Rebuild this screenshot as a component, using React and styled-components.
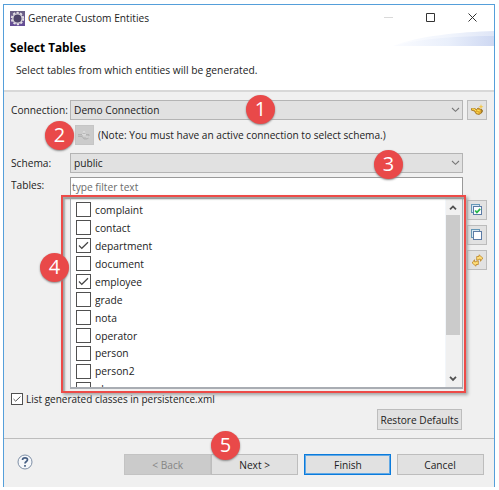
import React from "react";
import styled, { createGlobalStyle, css } from "styled-components";

const GlobalStyle = createGlobalStyle`
  * { box-sizing: border-box; }
  body { margin: 0; background: #fff; overflow: hidden; }
`;

const Dialog = styled.main`
  position: relative;
  display: flex;
  flex-direction: column;
  width: 492px;
  height: 483px;
  margin: 4px 0 0 3px;
  border: 1px solid #559fda;
  border-bottom: 0;
  background: #f0f0f0;
  color: #1c1c1c;
  font: 11px/18px "Open Sans", "Noto Sans", sans-serif;
`;

const Label = styled.span`
  display: block;
  white-space: pre;
  transform: scaleX(${(p) => p.$scale || 0.925});
  transform-origin: ${(p) => (p.$center ? "center" : "left")};
`;

const Header = styled.header`
  height: 87px;
  background: #fff;
  border-bottom: 2px solid #d8d8d8;
`;

const TitleBar = styled.div`
  display: flex;
  align-items: center;
  height: 26px;
  padding-left: 6px;
  gap: 3px;
`;

const WindowControls = styled.svg`
  width: 94px;
  height: 10px;
  margin: -1px 17px 0 auto;
`;

const Banner = styled.div`
  display: flex;
  justify-content: space-between;
  height: 28px;
`;

const Heading = styled.h1`
  margin: 7px 0 0 6px;
  color: #000;
  font-size: 12px;
  line-height: 20px;
  transform: scaleX(0.98);
  transform-origin: left;
`;

const Description = styled.div`
  padding: 2px 0 0 12px;
`;

const Body = styled.section`
  display: flex;
  flex-direction: column;
  height: 346px;
  padding: 8px 7px 0;
`;

const Field = styled.div`
  display: grid;
  grid-template-columns: 55px 393px 20px;
  column-gap: 4px;
  align-items: center;
  height: 20px;
`;

const Select = styled.div`
  display: flex;
  align-items: center;
  justify-content: space-between;
  height: 20px;
  padding: 0 2px 1px 3px;
  border: 1px solid #b4b4b4;
  background: #e1e1e1;
`;

const IconButton = styled.button`
  display: grid;
  place-items: center;
  width: ${(p) => (p.$disabled ? 19 : 20)}px;
  height: 20px;
  padding: 0;
  border: 1px solid ${(p) => (p.$disabled ? "#c5c5c5" : "#bcbcbc")};
  background: ${(p) => (p.$disabled ? "#cbcbcb" : "#e2e2e2")};
`;

const NoteRow = styled.div`
  display: flex;
  align-items: center;
  gap: 4px;
  height: 20px;
  margin: 5px 0 8px 64px;
`;

const TablesRow = styled.div`
  display: grid;
  grid-template-columns: 55px 393px 20px;
  column-gap: 4px;
  height: 212px;
  margin-top: 4px;
`;

const TablesLabel = styled.div`
  margin-top: -1px;
`;

const FilterInput = styled.div`
  height: 22px;
  padding: 0 1px;
  border: 1px solid #999;
  background: #fff;
  color: #6b6b6b;
`;

const TableList = styled.div`
  display: flex;
  justify-content: space-between;
  height: 190px;
  overflow: hidden;
  border: 1px solid #a9adb3;
  border-top: 0;
  border-bottom-width: 2px;
  background: #fff;
`;

const Rows = styled.div`
  padding: 2px 0 0 5px;
`;

const TableRow = styled.div`
  display: flex;
  align-items: center;
  height: 17.95px;
  gap: 4px;
`;

const Check = styled.span`
  display: grid;
  place-items: center;
  flex: none;
  width: ${(p) => p.$size}px;
  height: ${(p) => p.$size}px;
  border: 1px solid #505050;
  background: #fff;
`;

const Scrollbar = styled.div`
  width: 17px;
  padding-right: 2px;
  border-left: 1px solid #f2f6fa;
  background: #f0f0f0;
  display: flex;
  flex-direction: column;
  align-items: center;
`;

const ScrollThumb = styled.div`
  width: 14px;
  height: 121px;
  margin-bottom: 36px;
  background: #cbcbcb;
`;

const SideButtons = styled.div`
  display: flex;
  flex-direction: column;
  gap: 5px;
  padding-top: 23px;
`;

const Persistence = styled.div`
  display: flex;
  align-items: center;
  gap: 3px;
  height: 18px;
  margin-top: 1px;
`;

const PushButton = styled.button`
  display: flex;
  align-items: center;
  justify-content: center;
  width: ${(p) => p.$width || 87}px;
  height: 21px;
  padding: 0 0 1px;
  border: 1px solid #bdbdbd;
  background: #e1e1e1;
  color: #1c1c1c;
  font: inherit;
  line-height: 17px;
  ${(p) => p.$muted && css`background: #cbcbcb; border-color: #c3c3c3; color: #858585;`}
  ${(p) => p.$primary && css`border-color: #0b7bdc; box-shadow: inset 0 0 0 1px #62a9e5;`}
`;

const RestoreSlot = styled.div`
  display: flex;
  margin: 1px 0 0 366px;
`;

const Footer = styled.footer`
  display: flex;
  height: 49px;
  padding: 15px 10px 0 13px;
  border-top: 1px solid #bdbdbd;
`;

const HelpIcon = styled.svg`
  width: 16px;
  height: 16px;
  margin: 0 91px 0 0;
`;

const FooterButtons = styled.div`
  display: flex;
  & > :nth-child(2) { margin-right: 6px; }
  & > :nth-child(3) { margin-right: 6px; }
`;

const Highlight = styled.div`
  position: absolute;
  left: 57px;
  top: 190px;
  width: 405px;
  height: 198px;
  border: 2px solid #ed4b48;
  box-shadow: 2px 2px 3px #a5a5a5, inset 2px 2px 2px #a2a5a4, inset 0 2px 1px #8d9290;
  pointer-events: none;
`;

const Badge = styled.div`
  position: absolute;
  left: ${(p) => p.$x}px;
  top: ${(p) => p.$y}px;
  width: 29px;
  height: 29px;
  border-radius: 50%;
  background: #e94949;
  box-shadow: 0 1px 2px #888;
  color: #fff;
  font: 20px/27px "Open Sans", sans-serif;
  text-align: center;
`;

const Chevron = ({ up, bold }) => (
  <svg width={bold ? 14 : 9} height={bold ? 16 : 9} viewBox={bold ? "0 0 14 16" : "0 0 9 9"} fill="none">
    <path
      d={bold ? (up ? "M4 10.5L7 7.5L10 10.5" : "M4 6L7 9L10 6") : "M1 3L4.5 6.3L8 3"}
      stroke={bold ? "#505050" : "#777"}
      strokeWidth={bold ? 1.8 : 1.1}
    />
  </svg>
);

const Tick = ({ size = 13 }) => (
  <svg width={size} height={size} viewBox="0 0 13 13" fill="none">
    <path d="M2 6.5L4.8 9.3L11 3.3" stroke="#444" strokeWidth="1.2" />
  </svg>
);

const AppIcon = () => (
  <svg width="15" height="15" viewBox="0 0 15 15">
    <defs>
      <linearGradient id="app" x2="0" y2="1">
        <stop stopColor="#6b6284" />
        <stop offset="1" stopColor="#654b98" />
      </linearGradient>
    </defs>
    <path fill="url(#app)" d="M0 0h15v15H0z" />
    <circle cx="7.5" cy="7.5" r="5.7" fill="none" stroke="#e6e1e6" strokeWidth="2" strokeDasharray="2.2 1.4" />
    <circle cx="7.5" cy="7.5" r="4.6" fill="#493f66" stroke="#d6d2d7" strokeWidth="1.4" />
    <path d="M4 6h7M3.5 8h8M4.5 10h6" stroke="#5c5274" strokeWidth=".6" />
  </svg>
);

const Swoosh = () => (
  <svg width="101" height="15" viewBox="0 0 101 15">
    <defs>
      <linearGradient id="sweep">
        <stop stopColor="#fbfcff" />
        <stop offset=".55" stopColor="#e9effb" />
        <stop offset="1" stopColor="#ced8f2" />
      </linearGradient>
    </defs>
    <path d="M0 15C25 5 66 1 101 0V15Z" fill="url(#sweep)" opacity=".65" />
    <path d="M0 15C30 7 68 5 101 5V15Z" fill="url(#sweep)" />
  </svg>
);

const PlugIcon = () => (
  <svg width="13" height="12" viewBox="0 0 13 12">
    <path d="M.5 4.5h3l2 1 1.5-1.5 4 2-.5 3-2.5 1.5-3-.8L3.5 7l-3-.8z" fill="#e0a92c" stroke="#a1731f" strokeWidth=".8" />
    <path d="M1 5h2l2 2M6 6l3 1M5.5 8.5l2 .5" fill="none" stroke="#ffe15a" />
    <path d="M10 0l.7 2 1.8.7-1.8.7L10 5.3l-.7-1.9-1.8-.7L9.3 2z" fill="#f4c94c" />
    <path d="M10.2 5l1.2 2-1.2 2" fill="none" stroke="#9a7424" strokeWidth="1.1" />
  </svg>
);

const MutedPlugIcon = () => (
  <svg width="13" height="12" viewBox="0 0 13 12">
    <path d="M0 5.5h4l2-2 2 2h3v3L9 10H6L4 7.5H0" fill="#c1c1c1" stroke="#aaa" strokeWidth=".7" />
    <path d="M5 4l1-2 1 2M8 8h4M5 7h3" fill="none" stroke="#dedede" />
    <path d="M4 5l2 1 2-1" fill="none" stroke="#e4e4e4" />
  </svg>
);

const SelectIcon = ({ checked }) => (
  <svg width="12" height="12" viewBox="0 0 12 12">
    <rect x=".5" y=".5" width="8" height="8" fill="#d7e8f2" stroke="#6698b8" />
    <rect x="2.5" y="2.5" width="8" height="8" fill="#fcfdff" stroke="#5c7ba5" />
    {checked && <path d="M4.2 6.5l1.7 2 3.3-3.7" fill="none" stroke="#27b64a" strokeWidth="1.8" />}
  </svg>
);

const RefreshIcon = () => (
  <svg width="13" height="13" viewBox="0 0 13 13">
    <path d="M5.7 6V2.5H8V.8L11.8 4 9.5 7.3V5.2H7.8V6z" fill="#ffdf79" stroke="#bd852a" strokeWidth=".8" />
    <path d="M7.3 7v3.5H5v1.7L1.2 9l2.3-3.3v2.1h1.7V7z" fill="#ffdf79" stroke="#bd852a" strokeWidth=".8" />
  </svg>
);

const tables = [
  ["complaint"], ["contact"], ["department", true], ["document"], ["employee", true],
  ["grade"], ["nota"], ["operator"], ["person"], ["person2"], ["phone"],
];

const steps = [
  [1, 242, 90], [2, 41, 116], [3, 370, 145], [4, 36, 248], [5, 207, 426],
];

export default function App() {
  return (
    <>
      <GlobalStyle />
      <Dialog>
        <Header>
          <TitleBar>
            <AppIcon />
            <Label>Generate Custom Entities</Label>
            <WindowControls viewBox="0 0 94 10" fill="none">
              <path d="M1 4.5h9" stroke="#d9d9d9" />
              <path d="M43.5.5h8v8h-8z" stroke="#333" />
              <path d="M85.5.5l8 8m0-8l-8 8" stroke="#333" />
            </WindowControls>
          </TitleBar>
          <Banner>
            <Heading>Select Tables</Heading>
            <Swoosh />
          </Banner>
          <Description><Label $scale={0.931}>Select tables from which entities will be generated.</Label></Description>
        </Header>
        <Body>
          <Field>
            <Label>Connection:</Label>
            <Select><Label>Demo Connection</Label><Chevron /></Select>
            <IconButton aria-label="New connection"><PlugIcon /></IconButton>
          </Field>
          <NoteRow>
            <IconButton $disabled disabled aria-label="Connect"><MutedPlugIcon /></IconButton>
            <Label $scale={0.921}>(Note: You must have an active connection to select schema.)</Label>
          </NoteRow>
          <Field>
            <Label>Schema:</Label>
            <Select><Label>public</Label><Chevron /></Select>
          </Field>
          <TablesRow>
            <TablesLabel><Label>Tables:</Label></TablesLabel>
            <div>
              <FilterInput><Label>type filter text</Label></FilterInput>
              <TableList>
                <Rows>
                  {tables.map(([name, checked]) => (
                    <TableRow key={name}>
                      <Check $size={15}>{checked && <Tick />}</Check>
                      <Label $scale={0.935}>{name}</Label>
                    </TableRow>
                  ))}
                </Rows>
                <Scrollbar><Chevron bold up /><ScrollThumb /><Chevron bold /></Scrollbar>
              </TableList>
            </div>
            <SideButtons>
              <IconButton aria-label="Select all"><SelectIcon checked /></IconButton>
              <IconButton aria-label="Deselect all"><SelectIcon /></IconButton>
              <IconButton aria-label="Refresh"><RefreshIcon /></IconButton>
            </SideButtons>
          </TablesRow>
          <Persistence>
            <Check $size={12}><Tick size={10} /></Check>
            <Label $scale={0.908}>List generated classes in persistence.xml</Label>
          </Persistence>
          <RestoreSlot>
            <PushButton $width={85}><Label $center $scale={0.92}>Restore Defaults</Label></PushButton>
          </RestoreSlot>
        </Body>
        <Footer>
          <HelpIcon viewBox="0 0 16 16">
            <circle cx="8" cy="8" r="7" fill="#f5f7fa" stroke="#7e8fa6" />
            <path d="M5.5 6C5.5 3 10.5 3.2 10.5 5.8C10.5 7.5 8 7.5 8 9.5M8 11v1.7" fill="none" stroke="#465f83" strokeWidth="1.7" />
          </HelpIcon>
          <FooterButtons>
            <PushButton $muted disabled><Label $center>&lt; Back</Label></PushButton>
            <PushButton><Label $center>Next &gt;</Label></PushButton>
            <PushButton $primary><Label $center>Finish</Label></PushButton>
            <PushButton><Label $center>Cancel</Label></PushButton>
          </FooterButtons>
        </Footer>
        <Highlight />
        {steps.map(([number, x, y]) => <Badge key={number} $x={x} $y={y}>{number}</Badge>)}
      </Dialog>
    </>
  );
}
